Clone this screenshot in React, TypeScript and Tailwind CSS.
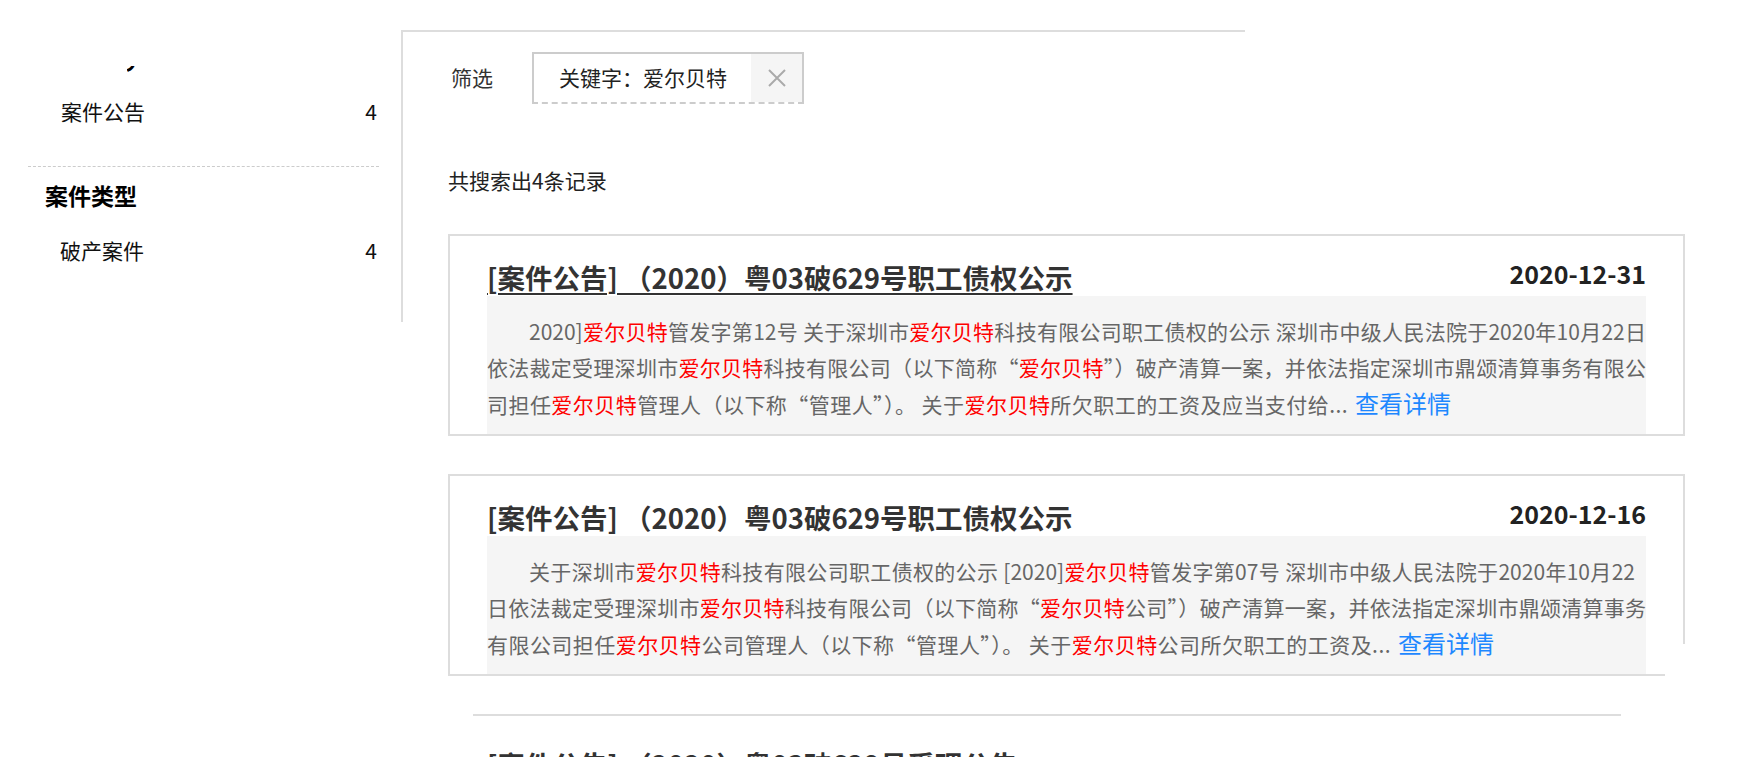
import React from "react";

const Hl = ({ children }: { children: React.ReactNode }) => (
  <span className="text-[#ff0000]">{children}</span>
);

const More = () => (
  <span className="text-[24px] tracking-normal text-[#1e88ff] ml-[7px]">查看详情</span>
);

const Line = ({
  children,
  first,
  last,
  extra = "",
}: {
  children: React.ReactNode;
  first?: boolean;
  last?: boolean;
  extra?: string;
}) => (
  <div
    className={
      (first ? "indent-[42px] " : "") +
      (last ? "text-left tracking-[0.45px] " : "text-justify [text-align-last:justify] ") +
      extra
    }
  >
    {children}
  </div>
);

function Card({
  title,
  date,
  underline,
  children,
  patch,
}: {
  title: string;
  date: string;
  underline?: boolean;
  children: React.ReactNode;
  patch?: boolean;
}) {
  return (
    <div className="relative w-[1237px] border-2 border-[#dddddd] px-[37px] bg-white">
      <div className="flex items-start justify-between leading-[30px]">
        <span
          className={
            "mt-[26px] text-[27.5px] font-bold text-[#333333] " +
            (underline ? "underline decoration-2 underline-offset-[4px]" : "")
          }
        >
          {title}
        </span>
        <span className="mt-[22px] text-[25px] font-bold text-[#222222]">{date}</span>
      </div>
      <div className="mt-[4px] bg-[#f5f5f5] pt-[17px] pb-[12px] text-[21px] leading-[36px] text-[#666666]">
        {children}
      </div>
      {patch && (
        <div className="absolute right-[-2px] bottom-[-2px] w-[20px] h-[32px] bg-white" />
      )}
    </div>
  );
}

export default function App() {
  return (
    <div className="w-[1744px] h-[757px] overflow-hidden bg-white flex font-['Noto_Sans_CJK_SC','Noto_Sans',sans-serif] text-[#222222]">
      {/* sidebar */}
      <aside className="w-[401px] shrink-0 flex flex-col">
        <div className="mt-[66px] ml-[127px] h-[6px] w-[8px] overflow-hidden">
          <div className="-mt-[19px] -ml-[2px] text-[22px] font-bold leading-[24px] text-black">
            分
          </div>
        </div>
        <div className="mt-[24px] h-[30px] flex items-center justify-between pl-[61px] pr-[24px] text-[21px] leading-[30px] text-[#111111]">
          <span>案件公告</span>
          <span>4</span>
        </div>
        <div className="mt-[40px] ml-[28px] w-[351px] border-t border-dashed border-[#cccccc]" />
        <div className="mt-[13px] h-[30px] pl-[45px] leading-[30px] text-[23px] font-bold text-black">
          案件类型
        </div>
        <div className="mt-[25px] h-[30px] flex items-center justify-between pl-[60px] pr-[24px] text-[21px] leading-[30px] text-[#111111]">
          <span>破产案件</span>
          <span>4</span>
        </div>
      </aside>

      {/* main panel */}
      <main className="mt-[30px] w-[844px] h-[292px] shrink-0 border-l-2 border-t-2 border-[#dddddd] pl-[45px]">
        <div className="mt-[20px] flex items-center">
          <span className="ml-[3px] w-[81px] text-[21px] text-[#333333]">筛选</span>
          <div className="h-[52px] flex items-stretch border-2 border-[#cccccc] [border-bottom-style:dashed]">
            <span className="flex items-center pl-[25px] pr-[24px] text-[21px] text-[#222222]">
              关键字：爱尔贝特
            </span>
            <span className="w-[51px] flex items-center justify-center bg-[#f5f5f5]">
              <svg width="20" height="20" viewBox="0 0 20 20">
                <path d="M2 2 L18 18 M18 2 L2 18" stroke="#aaaaaa" strokeWidth="2" />
              </svg>
            </span>
          </div>
        </div>

        <div className="mt-[61px] text-[21px] leading-[30px] text-[#222222]">共搜索出4条记录</div>

        <div className="mt-[39px] flex flex-col">
          <Card title="[案件公告] （2020）粤03破629号职工债权公示" date="2020-12-31" underline>
            <Line first>
              2020]<Hl>爱尔贝特</Hl>管发字第12号 关于深圳市<Hl>爱尔贝特</Hl>科技有限公司职工债权的公示 深圳市中级人民法院于2020年10月22日
            </Line>
            <Line>
              依法裁定受理深圳市<Hl>爱尔贝特</Hl>科技有限公司（以下简称“<Hl>爱尔贝特</Hl>”）破产清算一案，并依法指定深圳市鼎颂清算事务有限公
            </Line>
            <Line last>
              司担任<Hl>爱尔贝特</Hl>管理人（以下称“管理人”）。 关于<Hl>爱尔贝特</Hl>所欠职工的工资及应当支付给...
              <More />
            </Line>
          </Card>

          <div className="mt-[38px]">
            <Card title="[案件公告] （2020）粤03破629号职工债权公示" date="2020-12-16" patch>
              <Line first extra="pr-[11px]">
                关于深圳市<Hl>爱尔贝特</Hl>科技有限公司职工债权的公示 [2020]<Hl>爱尔贝特</Hl>管发字第07号 深圳市中级人民法院于2020年10月22
              </Line>
              <Line>
                日依法裁定受理深圳市<Hl>爱尔贝特</Hl>科技有限公司（以下简称“<Hl>爱尔贝特</Hl>公司”）破产清算一案，并依法指定深圳市鼎颂清算事务
              </Line>
              <Line last>
                有限公司担任<Hl>爱尔贝特</Hl>公司管理人（以下称“管理人”）。 关于<Hl>爱尔贝特</Hl>公司所欠职工的工资及...
                <More />
              </Line>
            </Card>
          </div>

          <div className="mt-[38px] ml-[25px] w-[1148px] border-t-2 border-[#dddddd]">
            <div className="flex items-start justify-between pl-[14px] pr-[14px] leading-[30px]">
              <span className="mt-[33px] text-[27.5px] font-bold text-[#333333]">[案件公告] （2020）粤03破629号受理公告</span>
              <span className="mt-[33px] text-[25px] font-bold text-[#222222]">2020-12-21</span>
            </div>
          </div>
        </div>
      </main>
    </div>
  );
}
